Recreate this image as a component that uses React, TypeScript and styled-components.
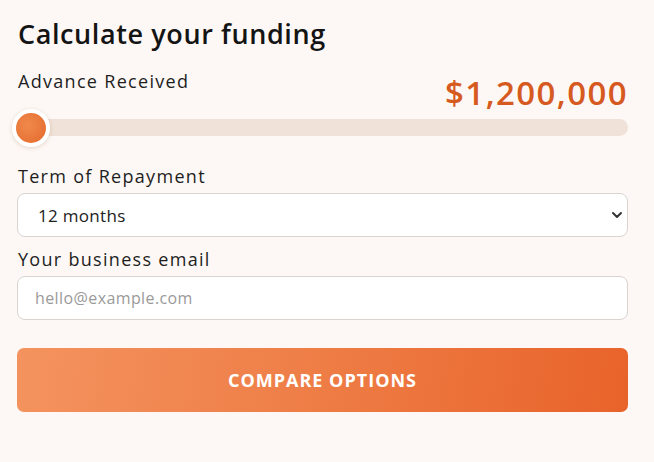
import React, { useState } from "react";
import styled, { createGlobalStyle } from "styled-components";

const GlobalStyle = createGlobalStyle`
  html, body {
    margin: 0;
    padding: 0;
    background: #fdf8f5;
  }
  body {
    font-family: "Open Sans", "Lato", sans-serif;
    color: #1c1c1c;
  }
`;

const Card = styled.div`
  width: 654px;
  height: 462px;
  box-sizing: border-box;
  padding: 16px 26px 0 17px;
  display: flex;
  flex-direction: column;
`;

const Title = styled.h1`
  margin: 0 0 0 1px;
  font-size: 27px;
  font-weight: 600;
  line-height: 36px;
  letter-spacing: 0.6px;
  color: #141414;
`;

const AmountRow = styled.div`
  display: flex;
  justify-content: space-between;
  align-items: flex-start;
  margin-top: 18px;
`;

const Label = styled.label`
  display: block;
  margin-left: 1px;
  font-size: 18px;
  letter-spacing: 1.3px;
  line-height: 22px;
  color: #1e1e1e;
`;

const Amount = styled.span`
  margin-top: 5px;
  font-size: 33px;
  font-weight: 600;
  line-height: 36px;
  letter-spacing: 1.4px;
  color: #d65a1f;
`;

const Track = styled.div`
  position: relative;
  height: 17px;
  margin-top: 8px;
  border-radius: 9px;
  background: #f0e2d8;
`;

const Thumb = styled.div`
  position: absolute;
  top: 50%;
  width: 38px;
  height: 38px;
  margin-left: -19px;
  transform: translateY(-50%);
  box-sizing: border-box;
  border-radius: 50%;
  border: 4px solid #fff;
  background: radial-gradient(circle at 40% 40%, #f08a4c, #e4682c);
  box-shadow: 0 1px 4px rgba(120, 60, 20, 0.2);
`;

const Field = styled.div<{ $top: number }>`
  margin-top: ${(p) => p.$top}px;
  display: flex;
  flex-direction: column;
  gap: 6px;
`;

const SelectWrap = styled.div`
  position: relative;
`;

const Select = styled.select`
  appearance: none;
  width: 100%;
  height: 44px;
  box-sizing: border-box;
  padding: 0 40px 0 20px;
  border: 1px solid #d9d4d0;
  border-radius: 8px;
  background: #fff;
  font-family: "Open Sans", sans-serif;
  font-size: 17px;
  letter-spacing: 0.3px;
  color: #222;
  outline: none;
`;

const Chevron = styled.svg`
  position: absolute;
  right: 5px;
  top: 50%;
  transform: translateY(-50%);
  pointer-events: none;
`;

const Input = styled.input`
  width: 100%;
  height: 44px;
  box-sizing: border-box;
  padding: 0 17px;
  border: 1px solid #d9d4d0;
  border-radius: 8px;
  background: #fff;
  font-family: "Open Sans", sans-serif;
  font-size: 16px;
  letter-spacing: 0.4px;
  color: #222;
  outline: none;
  &::placeholder {
    color: #9a9a9a;
  }
`;

const Button = styled.button`
  margin-top: 28px;
  height: 64px;
  border: none;
  border-radius: 7px;
  background: linear-gradient(100deg, #f4935f 0%, #ef7f48 45%, #e8632a 100%);
  color: #fff;
  font-family: "Open Sans", sans-serif;
  font-size: 18px;
  font-weight: 700;
  letter-spacing: 1px;
  cursor: pointer;
`;

export default function App() {
  const [term, setTerm] = useState("12");
  const [email, setEmail] = useState("");

  return (
    <>
      <GlobalStyle />
      <Card>
        <Title>Calculate your funding</Title>
        <AmountRow>
          <Label>Advance Received</Label>
          <Amount>$1,200,000</Amount>
        </AmountRow>
        <Track>
          <Thumb style={{ left: "14px" }} />
        </Track>
        <Field $top={29}>
          <Label>Term of Repayment</Label>
          <SelectWrap>
            <Select value={term} onChange={(e) => setTerm(e.target.value)}>
              <option value="6">6 months</option>
              <option value="12">12 months</option>
              <option value="18">18 months</option>
              <option value="24">24 months</option>
            </Select>
            <Chevron width="12" height="12" viewBox="0 0 12 12">
              <path
                d="M2 4l4 4 4-4"
                fill="none"
                stroke="#333"
                strokeWidth="2"
                strokeLinecap="round"
                strokeLinejoin="round"
              />
            </Chevron>
          </SelectWrap>
        </Field>
        <Field $top={11}>
          <Label>Your business email</Label>
          <Input
            type="email"
            placeholder="hello@example.com"
            value={email}
            onChange={(e) => setEmail(e.target.value)}
          />
        </Field>
        <Button>COMPARE OPTIONS</Button>
      </Card>
    </>
  );
}
